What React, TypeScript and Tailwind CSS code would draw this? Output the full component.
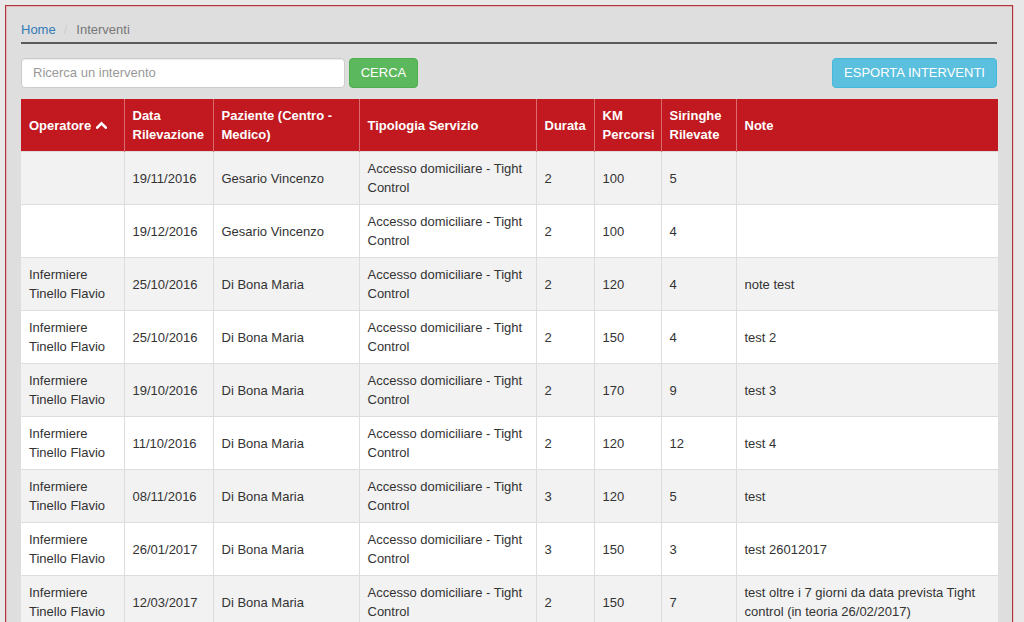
const font = { fontFamily: '"Liberation Sans", Arial, Helvetica, sans-serif' }

type Row = {
  operatore: string
  data: string
  paziente: string
  tipologia: string
  durata: string
  km: string
  siringhe: string
  note: string
}

const op = 'Infermiere Tinello Flavio'
const tip = 'Accesso domiciliare - Tight Control'

const rows: Row[] = [
  { operatore: '', data: '19/11/2016', paziente: 'Gesario Vincenzo', tipologia: tip, durata: '2', km: '100', siringhe: '5', note: '' },
  { operatore: '', data: '19/12/2016', paziente: 'Gesario Vincenzo', tipologia: tip, durata: '2', km: '100', siringhe: '4', note: '' },
  { operatore: op, data: '25/10/2016', paziente: 'Di Bona Maria', tipologia: tip, durata: '2', km: '120', siringhe: '4', note: 'note test' },
  { operatore: op, data: '25/10/2016', paziente: 'Di Bona Maria', tipologia: tip, durata: '2', km: '150', siringhe: '4', note: 'test 2' },
  { operatore: op, data: '19/10/2016', paziente: 'Di Bona Maria', tipologia: tip, durata: '2', km: '170', siringhe: '9', note: 'test 3' },
  { operatore: op, data: '11/10/2016', paziente: 'Di Bona Maria', tipologia: tip, durata: '2', km: '120', siringhe: '12', note: 'test 4' },
  { operatore: op, data: '08/11/2016', paziente: 'Di Bona Maria', tipologia: tip, durata: '3', km: '120', siringhe: '5', note: 'test' },
  { operatore: op, data: '26/01/2017', paziente: 'Di Bona Maria', tipologia: tip, durata: '3', km: '150', siringhe: '3', note: 'test 26012017' },
  {
    operatore: op,
    data: '12/03/2017',
    paziente: 'Di Bona Maria',
    tipologia: tip,
    durata: '2',
    km: '150',
    siringhe: '7',
    note: 'test oltre i 7 giorni da data prevista Tight control (in teoria 26/02/2017)',
  },
]

function CaretUp() {
  return (
    <svg width="11" height="8" viewBox="0 0 11 8" className="inline-block ml-[5px] -mt-[3px]">
      <path d="M1.2 6.6 L5.5 2.3 L9.8 6.6" fill="none" stroke="white" strokeWidth="2.6" strokeLinecap="square" />
    </svg>
  )
}

const th = 'px-[8px] py-[7px] text-left align-middle font-bold text-white border-l border-[#dc6b70] first:border-l-0'
const td = 'px-[8px] py-[7px] align-middle border-l border-t border-[#dddddd] first:border-l-0'

export default function App() {
  return (
    <div className="h-[622px] w-[1024px] overflow-hidden bg-[#e8e8e8] pt-[5px] pl-[5px]" style={font}>
      <div className="w-[1008px] h-[700px] border border-[#a8383d] bg-[#dedede] px-[15px] pt-[15px] shadow-[inset_1px_1px_0_#eab4b7,1px_0_0_#f2c2c4]">
        <div className="border-b-2 border-[#5a5a5a] pb-[3px] text-[13px] leading-[18px]">
          <span className="text-[#337ab7]">Home</span>
          <span className="text-[#cccccc] ml-[8px] mr-[9px]">/</span>
          <span className="text-[#777777]">Interventi</span>
        </div>

        <div className="mt-[14px] flex items-center h-[30px]">
          <div className="w-[324px] h-[30px] rounded-[4px] border border-[#cccccc] bg-white px-[11px] flex items-center text-[13px] text-[#999999] shadow-[inset_0_1px_1px_rgba(0,0,0,0.075)]">
            Ricerca un intervento
          </div>
          <button className="ml-[4px] h-[30px] w-[69px] rounded-[4px] border border-[#4cae4c] bg-[#5cb85c] text-[13px] text-white">
            CERCA
          </button>
          <div className="flex-1" />
          <button className="h-[30px] w-[165px] rounded-[4px] border border-[#46b8da] bg-[#5bc0de] text-[13px] text-white">
            ESPORTA INTERVENTI
          </button>
        </div>

        <table className="mt-[11px] w-[977px] table-fixed border-collapse text-[13px] leading-[19px] text-[#333333]">
          <colgroup>
            <col className="w-[103px]" />
            <col className="w-[89px]" />
            <col className="w-[146px]" />
            <col className="w-[177px]" />
            <col className="w-[58px]" />
            <col className="w-[67px]" />
            <col className="w-[75px]" />
            <col className="w-[262px]" />
          </colgroup>
          <thead>
            <tr className="h-[52px] bg-[#c1191f]">
              <th className={th}>
                Operatore
                <CaretUp />
              </th>
              <th className={th}>Data Rilevazione</th>
              <th className={th}>Paziente (Centro - Medico)</th>
              <th className={th}>Tipologia Servizio</th>
              <th className={th}>Durata</th>
              <th className={th}>KM Percorsi</th>
              <th className={th}>Siringhe Rilevate</th>
              <th className={th}>Note</th>
            </tr>
          </thead>
          <tbody>
            {rows.map((r, i) => (
              <tr key={i} className={`h-[52px] ${i % 2 === 0 ? 'bg-[#f2f2f2]' : 'bg-white'}`}>
                <td className={td}>{r.operatore}</td>
                <td className={td}>{r.data}</td>
                <td className={td}>{r.paziente}</td>
                <td className={td}>{r.tipologia}</td>
                <td className={td}>{r.durata}</td>
                <td className={td}>{r.km}</td>
                <td className={td}>{r.siringhe}</td>
                <td className={td}>{r.note}</td>
              </tr>
            ))}
          </tbody>
        </table>
      </div>
    </div>
  )
}
